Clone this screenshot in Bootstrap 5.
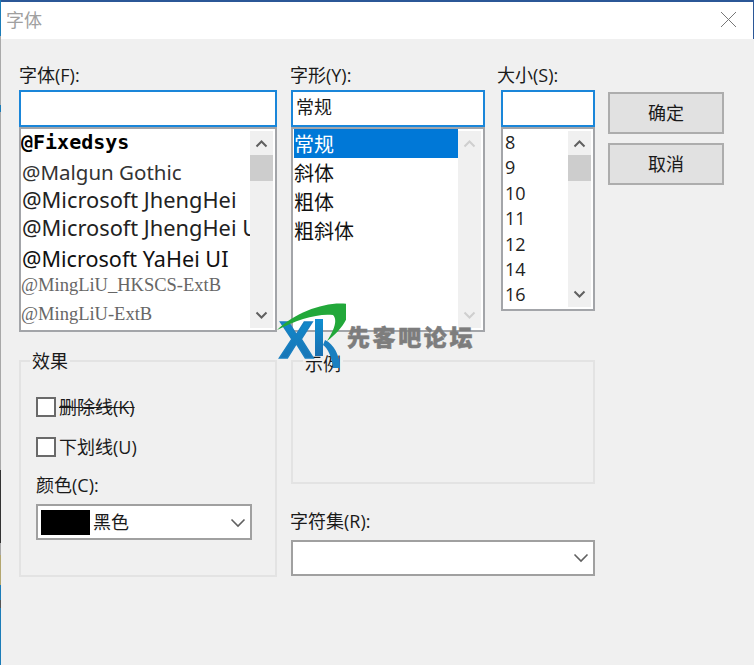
<!DOCTYPE html>
<html lang="zh">
<head>
<meta charset="utf-8">
<title>字体</title>
<link href="https://cdn.jsdelivr.net/npm/bootstrap@5.3.0/dist/css/bootstrap.min.css" rel="stylesheet">
<style>
html,body{height:100%;}
body{background:#f0f0f0;color:#1a1a1a;font-family:"Open Sans","Noto Sans CJK SC",sans-serif;font-size:18px;line-height:24px;overflow:hidden;}
.dlg{width:754px;height:665px;position:relative;}
.edge{width:1px;flex:none;background:linear-gradient(to bottom,#1b7cb8 0 36px,#aaa 36px 105px,#1b7cb8 105px 112px,#a8a8a8 112px 470px,#333 470px 543px,#a8a8a8 543px 555px,#b3a66f 555px 585px,#1b7cb8 585px 600px,#555 600px 608px,#1b7cb8 608px 665px);}
.dlg-main{width:753px;}
.titlebar{height:39px;background:#fff;border-top:2px solid #2b5797;border-right:1px solid #2b5797;color:#a0a0a0;font-size:18px;padding-left:5px;line-height:36px;}
.closex{width:17px;height:17px;margin-right:16px;margin-top:9px;}
.dlg-body{padding:24px 0 0 18px;}
.colA{width:258px;margin-right:14px;}
.colB{width:194px;margin-right:16px;}
.colC{width:94px;margin-right:13px;}
.colD{width:116px;padding-top:29px;}
.lbl{height:27px;line-height:24px;margin:0;white-space:nowrap;}
.colB .lbl{margin-left:-1px;}
.colC .lbl{margin-left:-4px;}
.form-control.edit{height:37px;border:2px solid #1a86d9;border-radius:0;background:#fff;padding:0 3px 5px 3px;font-size:18px;color:#1a1a1a;box-shadow:none;}
.lst{border:2px solid #a3a5a9;background:#fff;border-radius:0;overflow:hidden;position:relative;}
.lstA{height:205px;}
.lstB{height:205px;}
.lstC{height:184px;}
.rows{flex:1;min-width:0;overflow:hidden;white-space:nowrap;}
.sb{width:23px;flex:none;background:#f0f0f0;margin:2px 2px 2px 0;}
.sb svg{display:block;margin:0 auto;}
.sb .up{height:24px;padding-top:8px;}
.sb .thumb{height:26px;background:#cdcdcd;}
.sb .sp{flex:1;}
.sb .dn{height:24px;padding-top:7px;}
.i1{height:27px;font:bold 20px/26px "DejaVu Sans Mono",monospace;color:#000;}
.i2{height:29px;line-height:30px;font-size:20.5px;font-family:"Noto Sans",sans-serif;color:#333;padding:1px 0 0 1px;}
.i3{height:28px;line-height:30px;font-size:21.8px;font-family:"Noto Sans",sans-serif;color:#222;padding-left:1px;}
.i4{height:29px;line-height:35px;font-size:21.6px;font-family:"Noto Sans",sans-serif;color:#111;padding-left:1px;}
.i5{height:29px;line-height:24px;font-family:"Liberation Serif",serif;font-size:18.5px;color:#666;padding-top:3px;}
.rows.padA{padding:0;}
.rows.padB{padding:0 0 0 1px;}
.rows.padC{padding:0 0 0 1px;}
.sty{height:29px;line-height:30px;padding-top:1px;font-size:20px;color:#111;margin-left:-1px;padding-left:1px;}
.sty.on{background:#0078d7;color:#fff;margin-left:0;padding-left:0;}
.sz{height:25.4px;line-height:24.4px;padding-left:1px;font-size:18px;color:#222;}
.sz:first-child{margin-top:1px;}
.dbtn.btn{display:block;width:100%;height:42px;background:#e1e1e1;border:2px solid #adadad;border-radius:0;color:#1a1a1a;font-size:18px;line-height:36px;padding:0;margin-bottom:9px;}
.lower{margin-top:28px;}
.grp{border:2px solid #e3e3e3;border-radius:0;position:relative;}
.grpA{width:258px;height:217px;margin-right:14px;padding:35px 0 0 15px;}
.grpB{width:304px;height:124px;}
.lgd{position:absolute;top:-13px;left:9px;background:#f0f0f0;padding:0 2px;line-height:24px;color:#1a1a1a;}
.lgdB{left:10px;top:-10px;}
.chkrow{height:40px;}
.chkrow span{margin-top:-2px;}
.form-check-input.chk{width:20px;height:20px;margin:0 3px 0 0;border:2px solid #6a6a6a;border-radius:0;background-color:#fff;box-shadow:none;float:none;}
.colorlbl{height:31px;line-height:24px;margin-top:-4px;}
.combo{border:2px solid #a0a0a0;background:#fff;height:36px;position:relative;}
.comboA{width:216px;padding:4px 0 0 3px;}
.comboB{width:304px;height:36px;}
.swatch{width:49px;height:25px;background:#000;margin-right:3px;flex:none;}
.chev{margin-left:auto;margin-right:4px;}
.lblR{margin-top:25px;height:31px;line-height:24px;margin-left:-1px;}
.wm{position:absolute;left:276px;top:300px;width:200px;height:72px;pointer-events:none;}
.wmtxt{position:absolute;left:71px;top:21px;font:900 23px/30px "Noto Sans CJK SC",sans-serif;color:#7d7d7d;letter-spacing:2.6px;white-space:nowrap;-webkit-text-stroke:.5px #7d7d7d;}
</style>
</head>
<body>
<div class="dlg d-flex">
  <div class="edge"></div>
  <div class="dlg-main">
    <div class="titlebar d-flex justify-content-between">
      <span>字体</span>
      <svg class="closex" viewBox="0 0 17 17"><path d="M1 1L16 16M16 1L1 16" stroke="#777" stroke-width="1" fill="none"/></svg>
    </div>
    <div class="dlg-body">
      <div class="d-flex">
        <div class="colA">
          <p class="lbl">字体(F):</p>
          <input class="form-control edit" type="text" aria-label="字体">
          <div class="lst lstA d-flex">
            <div class="rows padA">
              <div class="i1">@Fixedsys</div>
              <div class="i2">@Malgun Gothic</div>
              <div class="i3">@Microsoft JhengHei</div>
              <div class="i3">@Microsoft JhengHei UI</div>
              <div class="i4">@Microsoft YaHei UI</div>
              <div class="i5">@MingLiU_HKSCS-ExtB</div>
              <div class="i5">@MingLiU-ExtB</div>
            </div>
            <div class="sb d-flex flex-column">
              <div class="up"><svg width="13" height="9" viewBox="0 0 13 9"><path d="M1.5 7.5L6.5 2.5L11.5 7.5" stroke="#606060" stroke-width="2" fill="none"/></svg></div>
              <div class="thumb"></div><div class="sp"></div>
              <div class="dn"><svg width="13" height="9" viewBox="0 0 13 9"><path d="M1.5 1.5L6.5 6.5L11.5 1.5" stroke="#606060" stroke-width="2" fill="none"/></svg></div>
            </div>
          </div>
        </div>
        <div class="colB">
          <p class="lbl">字形(Y):</p>
          <input class="form-control edit" type="text" value="常规" aria-label="字形">
          <div class="lst lstB d-flex">
            <div class="rows padB">
              <div class="sty on">常规</div>
              <div class="sty">斜体</div>
              <div class="sty">粗体</div>
              <div class="sty">粗斜体</div>
            </div>
            <div class="sb d-flex flex-column">
              <div class="up"><svg width="13" height="9" viewBox="0 0 13 9"><path d="M1.5 7.5L6.5 2.5L11.5 7.5" stroke="#cfcfcf" stroke-width="2" fill="none"/></svg></div>
              <div class="sp"></div>
              <div class="dn"><svg width="13" height="9" viewBox="0 0 13 9"><path d="M1.5 1.5L6.5 6.5L11.5 1.5" stroke="#cfcfcf" stroke-width="2" fill="none"/></svg></div>
            </div>
          </div>
        </div>
        <div class="colC">
          <p class="lbl">大小(S):</p>
          <input class="form-control edit" type="text" aria-label="大小">
          <div class="lst lstC d-flex">
            <div class="rows padC">
              <div class="sz">8</div><div class="sz">9</div><div class="sz">10</div><div class="sz">11</div><div class="sz">12</div><div class="sz">14</div><div class="sz">16</div>
            </div>
            <div class="sb d-flex flex-column">
              <div class="up"><svg width="13" height="9" viewBox="0 0 13 9"><path d="M1.5 7.5L6.5 2.5L11.5 7.5" stroke="#606060" stroke-width="2" fill="none"/></svg></div>
              <div class="thumb"></div><div class="sp"></div>
              <div class="dn"><svg width="13" height="9" viewBox="0 0 13 9"><path d="M1.5 1.5L6.5 6.5L11.5 1.5" stroke="#606060" stroke-width="2" fill="none"/></svg></div>
            </div>
          </div>
        </div>
        <div class="colD">
          <button class="btn dbtn" type="button">确定</button>
          <button class="btn dbtn" type="button">取消</button>
        </div>
      </div>
      <div class="d-flex lower">
        <div class="grp grpA">
          <span class="lgd">效果</span>
          <div class="chkrow d-flex align-items-start"><input class="form-check-input chk" type="checkbox" aria-label="删除线"><span class="text-decoration-line-through">删除线(K)</span></div>
          <div class="chkrow d-flex align-items-start"><input class="form-check-input chk" type="checkbox" aria-label="下划线"><span>下划线(U)</span></div>
          <div class="colorlbl">颜色(C):</div>
          <div class="combo comboA d-flex align-items-start">
            <span class="swatch"></span><span>黑色</span>
            <svg class="chev mt-2" width="16" height="10" viewBox="0 0 16 10"><path d="M1.5 1.5L8 8L14.5 1.5" stroke="#606060" stroke-width="1.6" fill="none"/></svg>
          </div>
        </div>
        <div>
          <div class="grp grpB"><span class="lgd lgdB">示例</span></div>
          <div class="lblR">字符集(R):</div>
          <div class="combo comboB d-flex align-items-center">
            <svg class="chev" width="16" height="10" viewBox="0 0 16 10"><path d="M1.5 1.5L8 8L14.5 1.5" stroke="#606060" stroke-width="1.6" fill="none"/></svg>
          </div>
        </div>
      </div>
    </div>
  </div>
  <div class="wm">
    <svg width="70" height="72" viewBox="0 0 70 72">
      <defs><linearGradient id="bl" x1="0" y1="0" x2="0" y2="1"><stop offset="0" stop-color="#0f8fd0"/><stop offset="1" stop-color="#1a6fb0"/></linearGradient></defs>
      <text x="3" y="58" font-family="Liberation Sans,sans-serif" font-weight="700" font-size="52" fill="url(#bl)" stroke="#1a7fc0" stroke-width="1.5">X</text>
      <rect x="39" y="19" width="8" height="37" fill="url(#bl)"/>
      <path d="M49 40C58 44 64 56 64 68L57 68C56 58 52 48 47 45Z" fill="#1a7fc0"/>
      <path d="M1 30C20 12 50 1 72 4C77 14 64 32 51 41C58 30 62 20 57 15C42 13 20 20 1 30Z" fill="#22a83a"/>
    </svg>
    <span class="wmtxt">先客吧论坛</span>
  </div>
</div>
<script src="https://cdn.jsdelivr.net/npm/bootstrap@5.3.0/dist/js/bootstrap.bundle.min.js"></script>
</body>
</html>
